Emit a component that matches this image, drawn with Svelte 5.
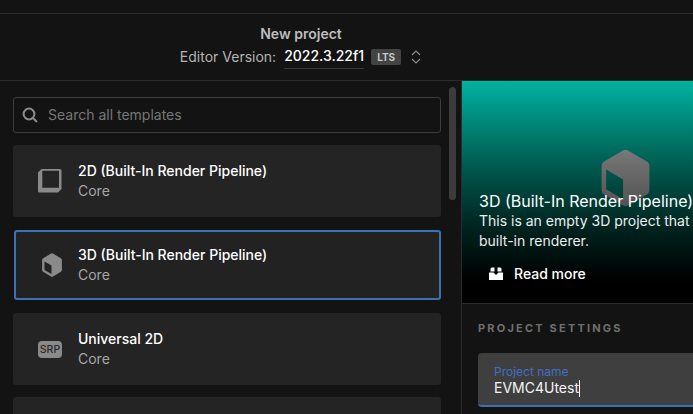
<script>
  const templates = [
    { name: '2D (Built-In Render Pipeline)', kind: 'square' },
    { name: '3D (Built-In Render Pipeline)', kind: 'cube', selected: true },
    { name: 'Universal 2D', kind: 'srp' }
  ];
</script>

<div class="page">
  <header class="top">
    <div class="title">New project</div>
    <div class="version">
      <span class="label">Editor Version:</span>
      <span class="value">2022.3.22f1</span>
      <span class="lts">LTS</span>
      <svg class="updown" width="10" height="14" viewBox="0 0 10 14" fill="none" stroke="#8a8a8a" stroke-width="1.2">
        <path d="M1 5 5 1l4 4" />
        <path d="M1 9l4 4 4-4" />
      </svg>
    </div>
  </header>

  <main class="body">
    <section class="left">
      <div class="scrollbar"></div>
      <div class="search">
        <svg width="16" height="16" viewBox="0 0 16 16" fill="none" stroke="#8c8c8c" stroke-width="2">
          <circle cx="7" cy="7" r="5.4" />
          <path d="M11 11l4 4" />
        </svg>
        <span>Search all templates</span>
      </div>
      {#each templates as t}
        <div class="card" class:selected={t.selected}>
          <div class="icon">
            {#if t.kind === 'square'}
              <svg width="24" height="24" viewBox="0 0 24 24">
                <path fill="#8a8a8a" fill-rule="evenodd" d="M3.500 0H22a1.500 1.500 0 0 1 1.500 1.500V20L20 23.500H1.500A1.500 1.500 0 0 1 0 22V3.500zM4.300 1.800v17h16.700v-17z" />
              </svg>
            {:else if t.kind === 'cube'}
              <svg width="20" height="24" viewBox="0 0 20 24">
                <path fill="#8a8a8a" fill-rule="evenodd" d="M9 .6a2 2 0 0 1 2 0l7.900 4.600a2 2 0 0 1 1 1.700v10.200a2 2 0 0 1-1 1.700L11 23.400a2 2 0 0 1-2 0l-7.900-4.600a2 2 0 0 1-1-1.700V6.900a2 2 0 0 1 1-1.700zM2.500 8.500V17l7 4v-8.500z" />
              </svg>
            {:else}
              <span class="srp">SRP</span>
            {/if}
          </div>
          <div class="text">
            <div class="name">{t.name}</div>
            <div class="core">Core</div>
          </div>
        </div>
      {/each}
      <div class="card"></div>
    </section>

    <section class="right">
      <div class="hero">
        <svg class="hero-cube" width="51" height="58" viewBox="0 0 20 24">
          <defs>
            <linearGradient id="cubefade" x1="0" y1="0" x2="0" y2="1">
              <stop offset="0" stop-color="#787878" />
              <stop offset="1" stop-color="#525252" />
            </linearGradient>
          </defs>
          <path fill="url(#cubefade)" fill-rule="evenodd" d="M9 .6a2 2 0 0 1 2 0l7.900 4.600a2 2 0 0 1 1 1.700v10.200a2 2 0 0 1-1 1.700L11 23.400a2 2 0 0 1-2 0l-7.900-4.600a2 2 0 0 1-1-1.700V6.900a2 2 0 0 1 1-1.700zM2 8.500v8.200l7 4.100v-8.200z" />
        </svg>
        <div class="hero-title">3D (Built-In Render Pipeline)</div>
        <p>This is an empty 3D project that<br />built-in renderer.</p>
        <div class="read">
          <svg width="14" height="14" viewBox="0 0 14 14" fill="#fff">
            <path d="M1.500 4.500V2A1.500 1.500 0 0 1 3 .5h2.500v4zM12.500 4.500V2A1.500 1.500 0 0 0 11 .5H8.500v4zM0 5.500h4.500L7 8l2.500-2.500H14V13H0z" />
          </svg>
          <span>Read more</span>
        </div>
      </div>
      <div class="settings">
        <h2>PROJECT SETTINGS</h2>
        <div class="field">
          <label for="pname">Project name</label>
          <div class="input" id="pname">EVMC4Utest<span class="caret"></span></div>
        </div>
      </div>
    </section>
  </main>
</div>

<style>
  :global(body) {
    margin: 0;
    background: #131313;
    overflow: hidden;
  }

  .page {
    width: 693px;
    height: 414px;
    overflow: hidden;
    background: #131313;
    font-family: Inter, "Liberation Sans", sans-serif;
    color: #fff;
    padding-top: 13px;
    box-sizing: border-box;
  }

  .top {
    height: 68px;
    box-sizing: border-box;
    border-top: 1px solid #2c2c2c;
    border-bottom: 1px solid #2c2c2c;
    display: flex;
    flex-direction: column;
    align-items: center;
    padding: 11px 91px 0 0;
  }

  .title {
    font-size: 14px;
    font-weight: 600;
    line-height: 18px;
    color: #bdbdbd;
  }

  .version {
    display: flex;
    align-items: center;
    font-size: 14px;
    line-height: 18px;
    height: 24px;
    margin: 2px 1px 0 0;
  }

  .label {
    color: #b4b4b4;
  }

  .value {
    margin-left: 8px;
    color: #fff;
    font-weight: 500;
    width: 80px;
    border-bottom: 1px solid #3a3a3a;
    height: 23px;
    line-height: 20px;
    box-sizing: border-box;
    white-space: nowrap;
  }

  .lts {
    margin-left: 7px;
    background: #434343;
    color: #c4c4c4;
    font-size: 10px;
    font-weight: 700;
    line-height: 16px;
    padding: 0 6px;
    border-radius: 2px;
  }

  .updown {
    margin-left: 10px;
  }

  .body {
    display: flex;
    height: 333px;
  }

  .left {
    position: relative;
    width: 461px;
    flex: none;
    box-sizing: border-box;
    padding: 16px 20px 0 13px;
    overflow: hidden;
  }

  .scrollbar {
    position: absolute;
    left: 449px;
    top: 6px;
    width: 7px;
    height: 113px;
    border-radius: 4px;
    background: #3c3c3c;
  }

  .search {
    height: 36px;
    box-sizing: border-box;
    border: 1px solid #3e3e3e;
    border-radius: 3px;
    display: flex;
    align-items: center;
    gap: 10px;
    padding: 0 0 1px 8px;
    font-size: 14px;
    color: #777;
  }

  .card {
    height: 72px;
    margin-top: 12px;
    box-sizing: border-box;
    background: #242424;
    border-radius: 3px;
    display: flex;
    align-items: center;
  }

  .card.selected {
    border: 2px solid #3a72b8;
    margin-left: 1px;
    background: #222;
    height: 70px;
    margin-top: 13px;
    margin-bottom: 13px;
  }

  .card.selected + .card {
    margin-top: 0;
  }

  .icon {
    width: 65px;
    flex: none;
    display: flex;
    padding-left: 25px;
    box-sizing: border-box;
  }

  .card.selected .icon {
    width: 62px;
    padding-left: 26px;
  }

  .srp {
    background: #8a8a8a;
    color: #2a2a2a;
    font-size: 10.500px;
    font-weight: 500;
    line-height: 17px;
    width: 24px;
    text-align: center;
    border-radius: 4px;
  }

  .name {
    font-size: 14px;
    font-weight: 500;
    line-height: 20px;
  }

  .core {
    font-size: 14px;
    color: #a6a6a6;
    line-height: 20px;
  }

  .right {
    flex: 1;
    min-width: 0;
    border-left: 1px solid #2c2c2c;
  }

  .hero {
    position: relative;
    height: 223px;
    box-sizing: border-box;
    padding: 110px 0 0 17px;
    background: linear-gradient(#00b3a0 0%, #00564c 40%, #00201c 68%, #000 90%);
    border-bottom: 1px solid #2c2c2c;
    white-space: nowrap;
  }

  .hero-cube {
    position: absolute;
    left: 138px;
    top: 68px;
  }

  .hero-title {
    position: relative;
    font-size: 16px;
    font-weight: 400;
    line-height: 20px;
  }

  .hero p {
    position: relative;
    margin: 0;
    font-size: 14px;
    line-height: 20px;
    color: #eee;
  }

  .read {
    display: flex;
    align-items: center;
    gap: 11px;
    margin: 13px 0 0 10px;
    font-size: 14px;
    font-weight: 500;
    line-height: 20px;
  }

  .settings {
    padding: 16px 0 0 16px;
  }

  h2 {
    margin: 0;
    font-size: 11px;
    font-weight: 700;
    letter-spacing: 2.200px;
    line-height: 16px;
    color: #6f6f6f;
  }

  .field {
    margin-top: 17px;
    height: 54px;
    box-sizing: border-box;
    background: #3f3f3f;
    border-bottom: 2px solid #3a72b8;
    border-radius: 4px 0 0 4px;
    padding: 11px 0 0 16px;
  }

  label {
    display: block;
    font-size: 12px;
    line-height: 15px;
    color: #3f6fc4;
  }

  .input {
    font-size: 14px;
    line-height: 18px;
    color: #f4f4f4;
    display: flex;
    align-items: center;
  }

  .caret {
    width: 1px;
    height: 17px;
    background: #fff;
  }
</style>
